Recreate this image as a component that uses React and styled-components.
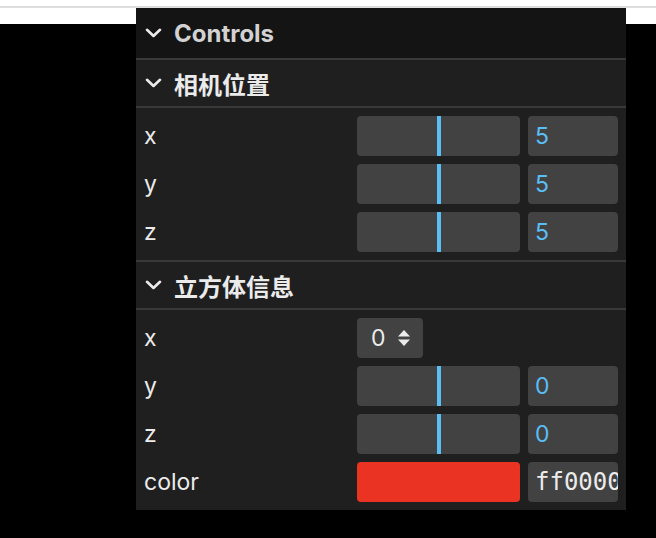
import React from 'react';
import styled, { createGlobalStyle } from 'styled-components';

const GlobalStyle = createGlobalStyle`
  html, body {
    margin: 0;
    padding: 0;
    background: #ffffff;
  }
  body {
    font-family: Inter, "Noto Sans CJK SC", sans-serif;
  }
`;

const Page = styled.div`
  position: relative;
  width: 656px;
  height: 538px;
  overflow: hidden;
`;

const TopStrip = styled.div`
  height: 24px;
  background: #ffffff;
  padding-top: 6px;
  box-sizing: border-box;
`;

const Rule = styled.div`
  height: 2px;
  background: #dddddd;
`;

const Canvas = styled.div`
  height: 514px;
  background: #000000;
`;

const Panel = styled.div`
  position: absolute;
  top: 8px;
  left: 136px;
  width: 490px;
  background: #1f1f1f;
  color: #ebebeb;
  font-family: Inter, "Noto Sans CJK SC", sans-serif;
`;

const Title = styled.div`
  display: flex;
  align-items: center;
  gap: 12px;
  height: ${(p) => (p.$root ? '50px' : '46px')};
  padding-left: 9px;
  background: ${(p) => (p.$root ? '#141414' : '#1f1f1f')};
  border-top: ${(p) => (p.$root ? 'none' : '2px solid #393939')};
  border-bottom: ${(p) => (p.$root ? 'none' : '2px solid #393939')};
  color: ${(p) => (p.$root ? '#d2d2d2' : '#ebebeb')};
  font-size: 24px;
  font-weight: 700;
`;

const Children = styled.div`
  display: flex;
  flex-direction: column;
  gap: 8px;
  padding: 8px 8px;
`;

const Row = styled.div`
  display: flex;
  align-items: center;
  height: 40px;
`;

const Label = styled.div`
  flex: 1;
  font-size: 23px;
  color: #ebebeb;
`;

const Widget = styled.div`
  display: flex;
  gap: 8px;
  width: 261px;
`;

const Slider = styled.div`
  position: relative;
  flex: 1;
  height: 40px;
  border-radius: 4px;
  background: #424242;
`;

const Knob = styled.div`
  position: absolute;
  top: 0;
  bottom: 0;
  width: 4px;
  background: #5bbdf5;
`;

const NumberBox = styled.div`
  width: 90px;
  height: 40px;
  box-sizing: border-box;
  padding-left: 7px;
  border-radius: 4px;
  background: #424242;
  display: flex;
  align-items: center;
  overflow: hidden;
  white-space: nowrap;
  color: ${(p) => (p.$mono ? '#ebebeb' : '#5bbdf5')};
  font-family: ${(p) => (p.$mono ? '"DejaVu Sans Mono", monospace' : 'Inter, sans-serif')};
  font-size: ${(p) => (p.$mono ? '24px' : '23px')};
`;

const Select = styled.div`
  display: flex;
  align-items: center;
  gap: 12px;
  width: 66px;
  height: 40px;
  box-sizing: border-box;
  padding-left: 14px;
  border-radius: 4px;
  background: #424242;
  font-size: 23px;
  color: #ebebeb;
`;

const Swatch = styled.div`
  flex: 1;
  height: 40px;
  border-radius: 4px;
  background: ${(p) => p.$color};
`;

const Chevron = () => (
  <svg width="17" height="10" viewBox="0 0 17 10">
    <path d="M2 1.8 L8.5 8 L15 1.8" fill="none" stroke="#ebebeb" strokeWidth="2.6" strokeLinecap="round" strokeLinejoin="round" />
  </svg>
);

const UpDown = () => (
  <svg width="12" height="18" viewBox="0 0 12 18">
    <path d="M6 1 L12 7.5 L0 7.5 Z" fill="#ebebeb" />
    <path d="M6 17 L12 10.5 L0 10.5 Z" fill="#ebebeb" />
  </svg>
);

const SliderRow = ({ label, value, pos }) => (
  <Row>
    <Label>{label}</Label>
    <Widget>
      <Slider>
        <Knob style={{ left: pos }} />
      </Slider>
      <NumberBox>{value}</NumberBox>
    </Widget>
  </Row>
);

const App = () => {
  const camera = [
    { label: 'x', value: 5 },
    { label: 'y', value: 5 },
    { label: 'z', value: 5 },
  ];

  return (
    <Page>
      <GlobalStyle />
      <TopStrip>
        <Rule />
      </TopStrip>
      <Canvas />
      <Panel>
        <Title $root>
          <Chevron />
          Controls
        </Title>
        <Title>
          <Chevron />
          相机位置
        </Title>
        <Children>
          {camera.map((c) => (
            <SliderRow key={c.label} label={c.label} value={c.value} pos={80} />
          ))}
        </Children>
        <Title>
          <Chevron />
          立方体信息
        </Title>
        <Children>
          <Row>
            <Label>x</Label>
            <Widget>
              <Select>
                0
                <UpDown />
              </Select>
            </Widget>
          </Row>
          <SliderRow label="y" value={0} pos={80} />
          <SliderRow label="z" value={0} pos={80} />
          <Row>
            <Label>color</Label>
            <Widget>
              <Swatch $color="#ea3323" />
              <NumberBox $mono>ff0000</NumberBox>
            </Widget>
          </Row>
        </Children>
      </Panel>
    </Page>
  );
};

export default App;
